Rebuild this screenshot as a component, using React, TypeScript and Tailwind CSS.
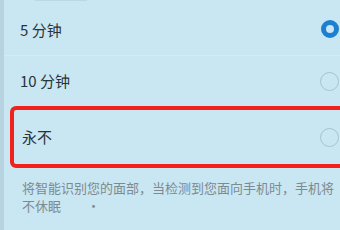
export default function App() {
  return (
    <div className="flex h-[230px] w-[340px] overflow-hidden bg-[#c9e6f3] font-['Noto_Sans_CJK_SC','Noto_Sans',sans-serif] text-[#283439]">
      <div className="w-[4px] shrink-0 bg-[#b7d3e0]" />
      <div className="flex min-w-0 flex-1 flex-col">
        <div className="h-[5px]">
          <div className="ml-[31px] h-px w-[52px] bg-[#bad7e4]" />
        </div>
        <div className="flex h-[51px] items-center justify-between border-b border-[#d3edf8] pl-[16px] pr-px">
          <span className="text-[15px]">5 分钟</span>
          <span className="mb-[3px] h-[18px] w-[18px] rounded-full border-[5px] border-[#1d7fd1]" />
        </div>
        <div className="flex h-[50px] items-center justify-between pl-[16px] pr-px">
          <span className="text-[15px]">10 分钟</span>
          <span className="h-[19px] w-[19px] rounded-full border-[1.5px] border-[#a9c3ce]" />
        </div>
        <div className="ml-[6px] flex h-[62px] w-[350px] shrink-0 items-center justify-between rounded-[6px] border-[4px] border-[#f2211b] pl-[8px] pr-[17px]">
          <span className="text-[15px]">永不</span>
          <span className="h-[19px] w-[19px] rounded-full border-[1.5px] border-[#a9c3ce]" />
        </div>
        <div className="mt-[11px] whitespace-nowrap pl-[18px] text-[13px] leading-[18px] text-[#7d8a90]">
          <p>将智能识别您的面部，当检测到您面向手机时，手机将</p>
          <p>
            不休眠<span className="ml-[26px]">·</span>
          </p>
        </div>
      </div>
    </div>
  )
}
